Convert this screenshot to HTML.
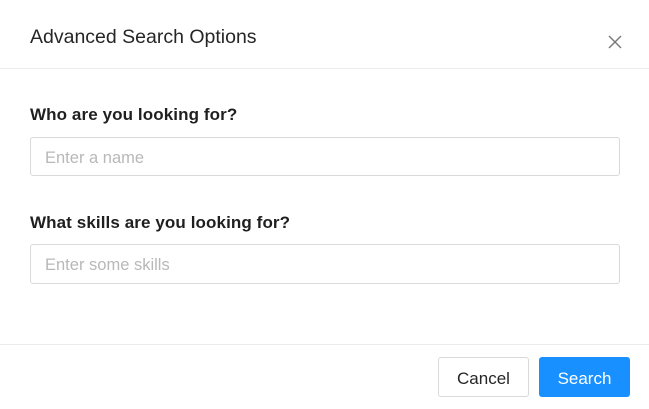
<!DOCTYPE html>
<html><head><style>
*{margin:0;padding:0;box-sizing:border-box}
body{width:649px;height:409px;background:#fff;font-family:"Liberation Sans",sans-serif;position:relative;overflow:hidden}
.a{position:absolute}
.title{left:30px;top:26px;font-size:19.5px;color:#262626}
.hr{left:0;width:649px;height:1px;background:#ececec}
.lbl{left:30px;font-size:17px;font-weight:bold;color:#1f1f1f;letter-spacing:0.1px}
.in{left:30px;width:590px;border:1px solid #d9d9d9;border-radius:3px;font-size:16.5px;color:#b8b8b8;padding-left:14px;padding-top:3px;display:flex;align-items:center}
.btn{top:357px;height:40px;width:91px;border-radius:3px;font-size:17px;display:flex;align-items:center;justify-content:center;padding-top:4px}
</style></head><body>
<div class="a title">Advanced Search Options</div>
<svg class="a" style="left:607px;top:34px" width="16" height="16" viewBox="0 0 16 16"><path d="M2 2L14 14M14 2L2 14" stroke="#777" stroke-width="1.4" fill="none"/></svg>
<div class="a hr" style="top:68px"></div>
<div class="a lbl" style="top:105px">Who are you looking for?</div>
<div class="a in" style="top:137px;height:39px">Enter a name</div>
<div class="a lbl" style="top:213px">What skills are you looking for?</div>
<div class="a in" style="top:244px;height:40px">Enter some skills</div>
<div class="a hr" style="top:344px"></div>
<div class="a btn" style="left:438px;border:1px solid #d9d9d9;color:#262626">Cancel</div>
<div class="a btn" style="left:539px;background:#1890ff;color:#fff">Search</div>
</body></html>
